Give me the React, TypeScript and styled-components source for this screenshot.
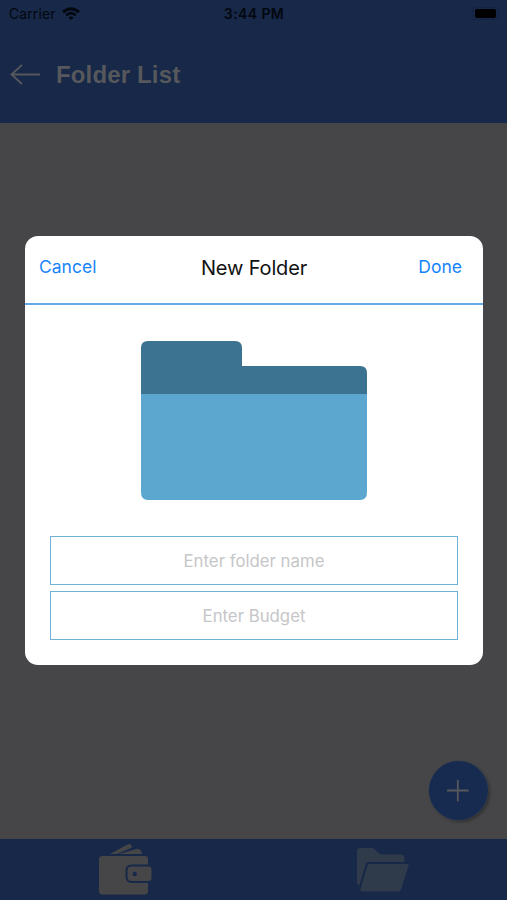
import React from "react";
import styled, { createGlobalStyle } from "styled-components";

const GlobalStyle = createGlobalStyle`
  * { box-sizing: border-box; }
  html, body { margin: 0; padding: 0; }
  body { background: #464648; font-family: Inter, "Liberation Sans", sans-serif; }
  button { appearance: none; border: 0; padding: 0; background: none; font: inherit; color: inherit; }
`;

const Screen = styled.div`
  position: relative;
  display: flex;
  flex-direction: column;
  width: 507px;
  height: 900px;
  overflow: hidden;
  background: #464648;
`;

const Header = styled.header`
  flex: none;
  height: 123px;
  background: #172848;
`;

const StatusBar = styled.div`
  display: grid;
  grid-template-columns: 1fr auto 1fr;
  align-items: center;
  height: 27px;
  padding: 0 8px 0 9px;
  color: #03070f;
  font-size: 13.8px;
`;

const Carrier = styled.div`
  display: flex;
  align-items: center;
  gap: 6px;
  letter-spacing: 0.2px;
`;

const Clock = styled.div`
  font-size: 14px;
  font-weight: 600;
  letter-spacing: 0.4px;
`;

const Battery = styled.div`
  justify-self: end;
  width: 27px;
  height: 13px;
  padding: 1px 2px;
  border: 1px solid #142340;
  border-radius: 4px;

  &::before {
    content: "";
    display: block;
    height: 100%;
    border-radius: 2px;
    background: #000;
  }
`;

const NavBar = styled.div`
  display: flex;
  align-items: center;
  gap: 15px;
  height: 95px;
  padding-left: 10px;
`;

const ScreenTitle = styled.h1`
  margin: 0;
  color: #56585c;
  font: bold 24px/30px "Liberation Sans", Arial, sans-serif;
  letter-spacing: 0.15px;
`;

const Content = styled.main`
  flex: 1;
  display: flex;
  align-items: flex-end;
  justify-content: flex-end;
  padding: 0 19px 19px 0;
`;

const AddButton = styled.button`
  display: flex;
  align-items: center;
  justify-content: center;
  width: 59px;
  height: 59px;
  border-radius: 50%;
  background: #172a50;
  box-shadow: 0 0 0 0.5px #3a4350, 2px 2px 3px #303133;
`;

const TabBar = styled.nav`
  flex: none;
  display: grid;
  grid-template-columns: 1fr 1fr;
  height: 61px;
  background: #172848;
`;

const Tab = styled.button<{ $inset: string }>`
  display: flex;
  align-items: flex-start;
  padding: ${({ $inset }) => $inset};
`;

const Dialog = styled.section`
  position: absolute;
  top: 236px;
  left: 25px;
  display: flex;
  flex-direction: column;
  width: 458px;
  height: 429px;
  border-radius: 13px;
  background: #fff;
`;

const DialogHeader = styled.div`
  display: grid;
  grid-template-columns: 1fr auto 1fr;
  align-items: center;
  height: 69px;
  padding: 0 21px 5px 14px;
  border-bottom: 2px solid #65aae8;
`;

const DialogTitle = styled.h2`
  margin: 1px 0 0 7px;
  color: #111;
  font-size: 20px;
  font-weight: 400;
  line-height: 26px;
  letter-spacing: -0.15px;
`;

const Action = styled.button<{ $align: "start" | "end" }>`
  justify-self: ${({ $align }) => $align};
  color: #1784fa;
  font-size: 17.5px;
  line-height: 24px;
`;

const FolderPicture = styled.div`
  display: flex;
  align-items: flex-start;
  justify-content: center;
  padding-top: 35px;
  height: 231px;
`;

const Fields = styled.div`
  display: flex;
  flex-direction: column;
  gap: 6px;
  padding: 0 25px;
`;

const Field = styled.input`
  width: 408px;
  height: 49px;
  padding: 0;
  border: 1px solid #70b2d5;
  border-radius: 0;
  outline: none;
  background: #fff;
  text-align: center;
  font: 400 16.8px Inter, sans-serif;

  &::placeholder {
    color: #c6c6c8;
    opacity: 1;
  }
`;

const WifiIcon = () => (
  <svg width="18" height="14" viewBox="0 0 18 14" fill="none" stroke="#03070f">
    <path d="M1 5.1Q9-1.8 17 5.1" strokeWidth="2.9" />
    <path d="M4.1 8.3Q9 4 13.9 8.3" strokeWidth="2.6" />
    <path d="M6.4 10.5Q9 8.3 11.6 10.5L9 13Z" fill="#03070f" stroke="none" />
  </svg>
);

const BackIcon = () => (
  <svg width="31" height="22" viewBox="0 0 31 22" fill="none" stroke="#56585c" strokeWidth="1.8">
    <path d="M1.5 10.5H30M12 1L1.5 10.5L12 20" />
  </svg>
);

const PlusIcon = () => (
  <svg width="23" height="23" viewBox="0 0 23 23" stroke="#56585c" strokeWidth="1.8">
    <path d="M10.8 0.8V22.5M0 11.5H21.6" />
  </svg>
);

const WalletIcon = () => (
  <svg width="54" height="52" viewBox="0 0 54 52" fill="#464648">
    <path d="M11 10L28.5 0.5Q31-.8 32.2 1.3L33 3.5L18 10Z" />
    <path d="M20 10L37.5 5Q41 4 42.5 8L43.3 10Z" />
    <path d="M3.5 12H46Q49 12 49 15V20.5H33Q26.5 20.5 26.5 26.5V32.5Q26.5 39 33 39H49V47Q49 50.5 45.5 50.5H3.5Q0 50.5 0 47V15.5Q0 12 3.5 12Z" />
    <path d="M32.5 22.5H49.5Q52.5 22.5 52.5 25.5V34Q52.5 37 49.5 37H32.5Q28.5 37 28.5 33V26.5Q28.5 22.5 32.5 22.5Z" />
    <circle cx="35.7" cy="30" r="2.2" fill="#172848" />
  </svg>
);

const OpenFolderIcon = () => (
  <svg width="52" height="44" viewBox="0 0 52 44" fill="#2f3b4b">
    <path d="M0 34V3Q0 0 3 0H16L23.5 6.5H44Q47.5 6.5 47.5 10V14H11Q9.5 14 9 15.5L2.5 37Q0 37 0 34Z" />
    <path d="M12.5 16H51Q52 16 51.6 17.2L44.4 40.5Q43.5 43.5 41 43.5H5Q3 43.5 3.6 40.5L10.4 18Q11 16 12.5 16Z" />
  </svg>
);

const FolderDrawing = () => (
  <svg width="228" height="160" viewBox="0 0 228 160">
    <path d="M1 54V8Q1 1 8 1H95Q102 1 102 8V26H220Q227 26 227 33V54Z" fill="#3c7390" />
    <path d="M1 54H227V152Q227 160 220 160H8Q1 160 1 152Z" fill="#5ba7d0" />
  </svg>
);

export default function App() {
  return (
    <>
      <GlobalStyle />
      <Screen>
        <Header>
          <StatusBar>
            <Carrier>Carrier <WifiIcon /></Carrier>
            <Clock>3:44 PM</Clock>
            <Battery />
          </StatusBar>
          <NavBar>
            <BackIcon />
            <ScreenTitle>Folder List</ScreenTitle>
          </NavBar>
        </Header>
        <Content>
          <AddButton aria-label="Add folder"><PlusIcon /></AddButton>
        </Content>
        <TabBar>
          <Tab $inset="5px 0 0 98.5px" aria-label="Wallet"><WalletIcon /></Tab>
          <Tab $inset="9px 0 0 103.5px" aria-label="Folders"><OpenFolderIcon /></Tab>
        </TabBar>
        <Dialog role="dialog" aria-label="New Folder">
          <DialogHeader>
            <Action $align="start">Cancel</Action>
            <DialogTitle>New Folder</DialogTitle>
            <Action $align="end">Done</Action>
          </DialogHeader>
          <FolderPicture><FolderDrawing /></FolderPicture>
          <Fields>
            <Field placeholder="Enter folder name" />
            <Field placeholder="Enter Budget" />
          </Fields>
        </Dialog>
      </Screen>
    </>
  );
}
